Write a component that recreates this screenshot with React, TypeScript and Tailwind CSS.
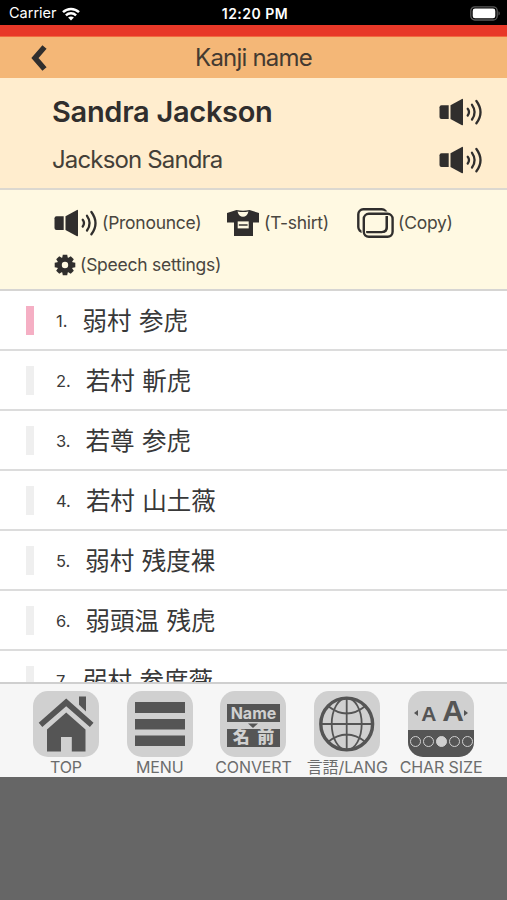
import type { ReactNode } from "react";

// =============================================================================
//  Data
// =============================================================================
interface KanjiName {
  id: number;
  kanji: string;
}

const NAMES: KanjiName[] = [
  { id: 1, kanji: "弱村 参虎" },
  { id: 2, kanji: "若村 斬虎" },
  { id: 3, kanji: "若尊 参虎" },
  { id: 4, kanji: "若村 山土薇" },
  { id: 5, kanji: "弱村 残度裸" },
  { id: 6, kanji: "弱頭温 残虎" },
  { id: 7, kanji: "弱村 参度薇" },
];

const TABS: { label: string; icon: ReactNode }[] = [
  { label: "TOP", icon: <HomeIcon /> },
  { label: "MENU", icon: <MenuIcon /> },
  { label: "CONVERT", icon: <ConvertIcon /> },
  { label: "言語/LANG", icon: <GlobeIcon /> },
  { label: "CHAR SIZE", icon: <CharSizeIcon /> },
];

// =============================================================================
//  Icons
// =============================================================================
function WifiIcon() {
  return (
    <svg className="ml-[5px] h-[14px] w-[18px]" viewBox="0 0 18 14" fill="none" stroke="#fff" strokeWidth="2.5">
      <path d="M1 5.2C5.5.9 12.500.9 17 5.200" />
      <path d="M3.900 8.300c2.900-2.700 7.300-2.700 10.200 0" />
      <path d="M9 13.600 6.100 10.600c1.700-1.500 4.100-1.500 5.800 0z" fill="#fff" stroke="none" />
    </svg>
  );
}

function BatteryIcon() {
  return (
    <svg className="h-[15px] w-[31px]" viewBox="0 0 31 15">
      <rect x=".8" y=".8" width="26.400" height="13.200" rx="4" fill="none" stroke="#5a5a5a" strokeWidth="1.300" />
      <rect x="2.700" y="2.600" width="22.600" height="9.600" rx="2.300" fill="#fff" />
      <path d="M28.500 5.300c1.700.6 1.700 3.600 0 4.200z" fill="#5a5a5a" />
    </svg>
  );
}

function SpeakerIcon() {
  return (
    <svg className="h-[28px] w-[44px]" viewBox="0 0 44 28" fill="#302e2d">
      <path d="M2.500 7.300h7.200v13.600H2.500q-2 0-2-2V9.300q0-2 2-2z" />
      <path d="M11.500 7.300 23 1q1-.5 1 .6v25q0 1.100-1 .6L11.500 20.900z" />
      <g fill="none" stroke="#302e2d" strokeWidth="2.300" strokeLinecap="round">
        <path d="M28.700 10.800q2.600 3.300 0 6.700" />
        <path d="M33 6.800q5.200 7.300 0 14.700" />
        <path d="M37.400 3q8.200 11.200 0 22.300" />
      </g>
    </svg>
  );
}

function ShirtIcon() {
  return (
    <svg className="h-[28px] w-[34px]" viewBox="0 0 34 28">
      <path d="M1 4 10.500 1q6.500 1.500 13 0L33 4v9.500h-6V27H8V13.500H1z" fill="#302e2d" />
      <path d="M11.500 2.400q5.500 1 11 0-1.500 5.400-5.500 5.400t-5.500-5.400z" fill="#fff9e2" />
      <rect x="11.700" y="12.400" width="11" height="7" fill="#fff9e2" />
      <path d="M12.800 16h8.800" stroke="#6a675f" strokeWidth="2" />
    </svg>
  );
}

function CopyIcon() {
  return (
    <svg className="h-[30px] w-[37px]" viewBox="0 0 37 30" fill="none" stroke="#302e2d" strokeWidth="2.400">
      <rect x="1.300" y="1.300" width="28.500" height="22.800" rx="5" />
      <rect x="6.800" y="5.800" width="28.800" height="23" rx="5" stroke="#fff9e2" strokeWidth="4.600" />
      <rect x="6.800" y="5.800" width="28.800" height="23" rx="5" />
      <path d="M29.800 8.200v11.500q0 4.400-4.400 4.400H10" strokeWidth="2" />
    </svg>
  );
}

function GearIcon() {
  return (
    <svg className="h-[22px] w-[22px]" viewBox="-11 -11 22 22">
      <circle r="5.500" fill="none" stroke="#302e2d" strokeWidth="4.600" />
      {[0, 45, 90, 135, 180, 225, 270, 315].map((deg) => (
        <path key={deg} d="M-2.900-6.500-2.200-10.300H2.200L2.900-6.500z" fill="#302e2d" transform={`rotate(${deg})`} />
      ))}
    </svg>
  );
}

function HomeIcon() {
  return (
    <svg className="h-full w-full" viewBox="0 0 66 66" fill="#555">
      <path d="M46 5.500h7v15l-7-6.700z" />
      <path d="M33.200 7.500 60.500 31.700l-3.600 4.300-23.700-20.700L9.300 36l-3.600-4.300z" />
      <path d="m33.200 21.500 19.300 17v22H38.800V46H28v14.500H14v-22z" />
    </svg>
  );
}

function MenuIcon() {
  return (
    <svg className="h-full w-full" viewBox="0 0 66 66" fill="#555">
      <path d="M8 11h50v11H8zM8 28h50v10.500H8zM8 44.500h50V55H8z" />
    </svg>
  );
}

function ConvertIcon() {
  return (
    <div className="flex h-full flex-col items-center pt-[12.500px] font-['Inter','Noto_Sans_CJK_JP',sans-serif] font-bold text-[#d0d0d0]">
      <span className="h-[18px] w-[53px] bg-[#555] text-center text-[16px] leading-[18px]">Name</span>
      <svg className="h-[7px] w-[12px]" viewBox="0 0 12 7">
        <path d="M1 1.500h10L6 6z" fill="#555" />
      </svg>
      <span className="h-[18px] w-[53px] bg-[#555] text-center text-[17px] font-black leading-[17px] [word-spacing:4px]">名 前</span>
    </div>
  );
}

function GlobeIcon() {
  return (
    <svg className="h-full w-full" viewBox="0 0 66 66" fill="none" stroke="#555" strokeWidth="1.800">
      <circle cx="32.700" cy="33" r="25.900" strokeWidth="3.400" />
      <ellipse cx="32.700" cy="33" rx="15" ry="26" />
      <path d="M32.700 6.500v53M6.500 33h53M14 15q18.700 15 37.400 0M14 51q18.700-15 37.400 0" />
    </svg>
  );
}

function CharSizeIcon() {
  return (
    <div className="flex h-full flex-col font-['Liberation_Sans',sans-serif] font-bold text-[#555]">
      <div className="flex h-[39px] items-end justify-center pb-[7px]">
        <svg className="mb-[7px] mr-[3px] h-[6px] w-[4px]" viewBox="0 0 4 6" fill="#555"><path d="M4 0v6L0 3z" /></svg>
        <span className="text-[21px] leading-[19px]">A</span>
        <span className="ml-[6px] text-[30px] leading-[25px]">A</span>
        <svg className="mb-[7px] h-[6px] w-[4px]" viewBox="0 0 4 6" fill="#555"><path d="M0 0v6l4-3z" /></svg>
      </div>
      <div className="flex flex-1 items-start justify-center gap-[2px] bg-[#555] pt-[6px]">
        {[0, 1, 2, 3, 4].map((i) => (
          <span key={i} className={`size-[11px] rounded-full border border-[#d0d0d0] ${i === 2 ? "bg-[#d0d0d0]" : ""}`} />
        ))}
      </div>
    </div>
  );
}

// =============================================================================
//  Page
// =============================================================================
export default function App() {
  return (
    <div className="flex h-[900px] w-[507px] flex-col overflow-hidden bg-[#666] font-['Inter','Noto_Sans_CJK_JP',sans-serif] text-[#302e2d]">
      <StatusBar />
      <div className="h-[12px] shrink-0 border-b border-[#f26a3f] bg-[#e83828]" />

      <header className="grid h-[41px] shrink-0 grid-cols-[80px_1fr_80px] items-center bg-[#f4b777] text-[#443a31]">
        <svg className="ml-[31px] h-[26px] w-[16px]" viewBox="0 0 16 26" fill="none" stroke="#302e2d" strokeWidth="5.500">
          <path d="M13.500 2 4 13l9.500 11" />
        </svg>
        <h1 className="pt-px text-center text-[24px] leading-none tracking-[-0.800px]">Kanji name</h1>
      </header>

      <section className="h-[112px] shrink-0 border-b-2 border-[#dcd8d0] bg-[#ffedce] pl-[52px] pr-[24px] pt-[10px]">
        <div className="flex h-[48px] items-center justify-between">
          <span className="text-[29px] font-semibold tracking-[-0.300px]">Sandra Jackson</span>
          <SpeakerIcon />
        </div>
        <div className="flex h-[47px] items-center justify-between">
          <span className="text-[24px] tracking-[-0.850px] text-[#443f38]">Jackson Sandra</span>
          <SpeakerIcon />
        </div>
      </section>

      <section className="h-[101px] shrink-0 border-b-2 border-[#d6d5d3] bg-[#fff9e2] pl-[54px] pt-[18px] text-[17.500px] tracking-[-0.250px] text-[#49463f]">
        <div className="flex h-[30px] items-center">
          <SpeakerIcon />
          <span className="ml-[4px] w-[124px] whitespace-nowrap">(Pronounce)</span>
          <ShirtIcon />
          <span className="ml-[4px] w-[93px] whitespace-nowrap">(T-shirt)</span>
          <CopyIcon />
          <span className="ml-[4px] whitespace-nowrap">(Copy)</span>
        </div>
        <div className="mt-[15px] flex h-[24px] items-center">
          <GearIcon />
          <span className="ml-[4px]">(Speech settings)</span>
        </div>
      </section>

      <ol className="h-[391px] shrink-0 overflow-hidden bg-white">
        {NAMES.map((name) => (
          <NameRow key={name.id} name={name} selected={name.id === 1} />
        ))}
      </ol>

      <TabBar />
    </div>
  );
}

// --- Sub-components ---

function StatusBar() {
  return (
    <div className="grid h-[25px] shrink-0 grid-cols-3 items-center bg-black pl-[9px] pr-[6px] pt-[2px] text-white">
      <div className="flex items-center">
        <span className="text-[14.500px] leading-none">Carrier</span>
        <WifiIcon />
      </div>
      <span className="text-center text-[14px] font-semibold leading-none tracking-[0.500px]">12:20 PM</span>
      <div className="flex justify-end">
        <BatteryIcon />
      </div>
    </div>
  );
}

function NameRow({ name, selected }: { name: KanjiName; selected: boolean }) {
  return (
    <li className="flex h-[60px] items-center border-b-2 border-[#dcdcdc] pl-[26px]">
      <span className={`h-[29px] w-[8px] ${selected ? "bg-[#f5afc4]" : "bg-[#efefef]"}`} />
      <span className="ml-[22px] pt-[3px] text-[16.500px] text-[#3a3a3a]">{name.id}.</span>
      <span className="ml-[15px] font-['Noto_Sans_CJK_JP',sans-serif] text-[24.500px] leading-none text-[#383838] [word-spacing:2px]">{name.kanji}</span>
    </li>
  );
}

function TabBar() {
  return (
    <nav className="flex h-[95px] shrink-0 justify-center border-t-2 border-[#cfcfcf] bg-[#f6f6f6] pt-[7px]">
      {TABS.map((tab) => (
        <div key={tab.label} className="flex w-[93.800px] flex-col items-center">
          <div className="size-[66px] overflow-hidden rounded-[15px] bg-[#d0d0d0]">{tab.icon}</div>
          <span className="mt-[1px] whitespace-nowrap text-[16px] leading-[18px] tracking-[-0.100px] text-[#6c6c6c]">{tab.label}</span>
        </div>
      ))}
    </nav>
  );
}
